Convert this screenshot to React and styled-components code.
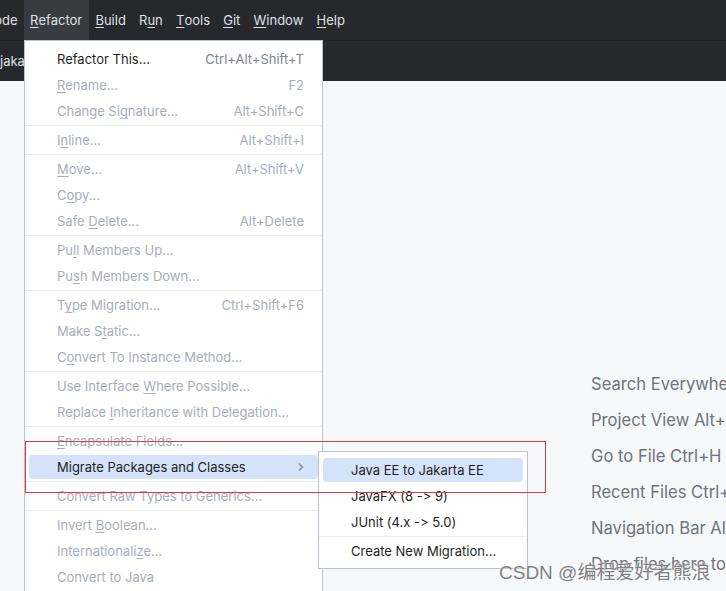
import React from "react";
import styled, { createGlobalStyle } from "styled-components";

const Global = createGlobalStyle`
  html, body { margin: 0; padding: 0; background: #f7f8fa; }
  body {
    font-family: Inter, "Noto Sans", "Liberation Sans", sans-serif;
    font-variant-ligatures: none;
    font-feature-settings: "calt" 0, "liga" 0;
  }
`;

const Page = styled.div`
  position: relative;
  width: 726px;
  height: 591px;
  overflow: hidden;
  background: #f7f8fa;
  display: flex;
  flex-direction: column;
`;

const MenuBar = styled.div`
  height: 40px;
  flex: none;
  background: #27282c;
  border-bottom: 1px solid #1f2023;
  display: flex;
  align-items: stretch;
`;

const BarItem = styled.div`
  display: flex;
  align-items: center;
  justify-content: flex-end;
  padding: 0 6.6px;
  color: #dfe1e5;
  font-size: 13px;
  white-space: nowrap;
  overflow: hidden;
  background: ${(p) => (p.$active ? "#393b40" : "transparent")};
`;

const ClippedItem = styled(BarItem)`
  width: 23.5px;
  flex: none;
  box-sizing: border-box;
  padding: 0 6px 0 0;
`;

const TabBar = styled.div`
  height: 40px;
  flex: none;
  background: #27282c;
  display: flex;
  align-items: center;
  color: #dfe1e5;
  font-size: 13px;
  white-space: nowrap;
`;

const Main = styled.div`
  flex: 1;
  padding: 285px 0 0 591px;
  display: flex;
  flex-direction: column;
`;

const Hint = styled.div`
  font-size: 16.6px;
  line-height: 36px;
  color: #6f737a;
  white-space: nowrap;
`;

const U = styled.span`
  text-decoration: underline;
  text-underline-offset: 2px;
  text-decoration-thickness: 1px;
`;

const Menu = styled.div`
  position: absolute;
  left: 24px;
  top: 40px;
  width: 297px;
  border: 1px solid #bcc0cc;
  background: #ffffff;
  padding: 5px 0 6px;
  display: flex;
  flex-direction: column;
`;

const SubMenu = styled(Menu)`
  left: 318px;
  top: 451px;
  width: 208px;
  padding: 5px 0 4px;
`;

const Item = styled.div`
  height: 24px;
  flex: none;
  margin: 1px 4px;
  padding: 0 14px 0 28px;
  border-radius: 4px;
  display: flex;
  align-items: center;
  justify-content: space-between;
  font-size: 13px;
  white-space: nowrap;
  color: ${(p) => (p.$disabled ? "#a8adbd" : "#1e1f22")};
  background: ${(p) => (p.$selected ? "#d4e2fa" : "transparent")};
`;

const Shortcut = styled.span`
  color: ${(p) => (p.$disabled ? "#a8adbd" : "#818594")};
`;

const Sep = styled.div`
  height: 1px;
  flex: none;
  margin: 1px 0;
  background: #ebecf0;
`;

const Chevron = styled.svg`
  width: 8px;
  height: 10px;
  margin-right: -1px;
`;

const RedBox = styled.div`
  position: absolute;
  left: 25px;
  top: 441px;
  width: 519px;
  height: 50px;
  border: 1px solid #e8383d;
  pointer-events: none;
`;

const Watermark = styled.div`
  position: absolute;
  left: 499px;
  top: 557px;
  font-size: 19px;
  color: #808082;
  white-space: nowrap;
  font-family: "Liberation Sans", "Noto Sans CJK SC", sans-serif;
  text-shadow: 0 0 2px #ffffff, 0 0 1px #ffffff;
`;

const menu = [
  { t: "Refactor This...", s: "Ctrl+Alt+Shift+T" },
  { t: [<U key="u">R</U>, "ename..."], s: "F2", d: true },
  { t: ["Change Si", <U key="u">g</U>, "nature..."], s: "Alt+Shift+C", d: true },
  "sep",
  { t: ["I", <U key="u">n</U>, "line..."], s: "Alt+Shift+I", d: true },
  "sep",
  { t: [<U key="u">M</U>, "ove..."], s: "Alt+Shift+V", d: true },
  { t: ["C", <U key="u">o</U>, "py..."], d: true },
  { t: ["Safe ", <U key="u">D</U>, "elete..."], s: "Alt+Delete", d: true },
  "sep",
  { t: ["Pu", <U key="u">l</U>, "l Members Up..."], d: true },
  { t: ["Pu", <U key="u">s</U>, "h Members Down..."], d: true },
  "sep",
  { t: ["T", <U key="u">y</U>, "pe Migration..."], s: "Ctrl+Shift+F6", d: true },
  { t: ["Make S", <U key="u">t</U>, "atic..."], d: true },
  { t: ["C", <U key="u">o</U>, "nvert To Instance Method..."], d: true },
  "sep",
  { t: ["Use Interface ", <U key="u">W</U>, "here Possible..."], d: true },
  { t: ["Replace ", <U key="u">I</U>, "nheritance with Delegation..."], d: true },
  "sep",
  { t: [<U key="u">E</U>, "ncapsulate Fields..."], d: true },
  { t: "Migrate Packages and Classes", sub: true, sel: true },
  "sep",
  { t: "Convert Raw Types to Generics...", d: true },
  "sep",
  { t: ["Invert ", <U key="u">B</U>, "oolean..."], d: true },
  { t: ["Internationali", <U key="u">z</U>, "e..."], d: true },
  { t: "Convert to Java", d: true },
  { t: "Convert to Kotlin", d: true },
];

const sub = [
  { t: "Java EE to Jakarta EE", sel: true },
  { t: "JavaFX (8 -> 9)" },
  { t: "JUnit (4.x -> 5.0)" },
  "sep",
  { t: "Create New Migration..." },
];

const hints = [
  "Search Everywhere Double Shift",
  "Project View Alt+1",
  "Go to File Ctrl+H",
  "Recent Files Ctrl+E",
  "Navigation Bar Alt+Home",
  "Drop files here to open them",
];

function renderItems(list) {
  return list.map((it, i) =>
    it === "sep" ? (
      <Sep key={i} />
    ) : (
      <Item key={i} $disabled={it.d} $selected={it.sel}>
        <span>{it.t}</span>
        {it.s && <Shortcut $disabled={it.d}>{it.s}</Shortcut>}
        {it.sub && (
          <Chevron viewBox="0 0 8 10">
            <path d="M2 1.5 L5.5 5 L2 8.5" fill="none" stroke="#818594" strokeWidth="1.3" />
          </Chevron>
        )}
      </Item>
    )
  );
}

export default function App() {
  return (
    <Page>
      <Global />
      <MenuBar>
        <ClippedItem>Code</ClippedItem>
        <BarItem $active><U>R</U>efactor</BarItem>
        <BarItem><U>B</U>uild</BarItem>
        <BarItem>R<U>u</U>n</BarItem>
        <BarItem><U>T</U>ools</BarItem>
        <BarItem><U>G</U>it</BarItem>
        <BarItem><U>W</U>indow</BarItem>
        <BarItem><U>H</U>elp</BarItem>
      </MenuBar>
      <TabBar>jakarta</TabBar>
      <Main>
        {hints.map((h) => (
          <Hint key={h}>{h}</Hint>
        ))}
      </Main>
      <Menu>{renderItems(menu)}</Menu>
      <SubMenu>{renderItems(sub)}</SubMenu>
      <RedBox />
      <Watermark>CSDN @编程爱好者熊浪</Watermark>
    </Page>
  );
}
